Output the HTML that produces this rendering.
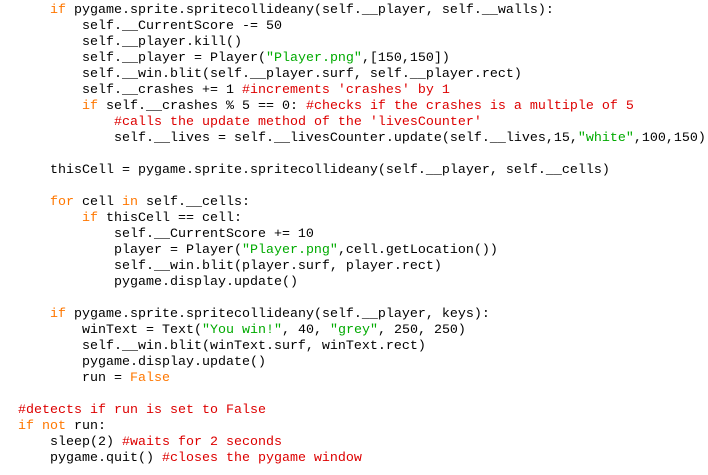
<!DOCTYPE html>
<html><head><meta charset="utf-8"><style>
html,body{margin:0;padding:0;background:#fff;width:708px;height:475px;overflow:hidden}
pre{position:absolute;left:18px;top:3px;margin:0;font-family:"Liberation Mono","Courier New",monospace;font-size:13.33px;line-height:16px;color:#000}
.k{color:#ff7700}.s{color:#00aa00}.c{color:#dd0000}
</style></head><body><pre>    <span class="k">if</span> pygame.sprite.spritecollideany(self.__player, self.__walls):
        self.__CurrentScore -= 50
        self.__player.kill()
        self.__player = Player(<span class="s">"Player.png"</span>,[150,150])
        self.__win.blit(self.__player.surf, self.__player.rect)
        self.__crashes += 1 <span class="c">#increments 'crashes' by 1</span>
        <span class="k">if</span> self.__crashes % 5 == 0: <span class="c">#checks if the crashes is a multiple of 5</span>
            <span class="c">#calls the update method of the 'livesCounter'</span>
            self.__lives = self.__livesCounter.update(self.__lives,15,<span class="s">"white"</span>,100,150)

    thisCell = pygame.sprite.spritecollideany(self.__player, self.__cells)

    <span class="k">for</span> cell <span class="k">in</span> self.__cells:
        <span class="k">if</span> thisCell == cell:
            self.__CurrentScore += 10
            player = Player(<span class="s">"Player.png"</span>,cell.getLocation())
            self.__win.blit(player.surf, player.rect)
            pygame.display.update()

    <span class="k">if</span> pygame.sprite.spritecollideany(self.__player, keys):
        winText = Text(<span class="s">"You win!"</span>, 40, <span class="s">"grey"</span>, 250, 250)
        self.__win.blit(winText.surf, winText.rect)
        pygame.display.update()
        run = <span class="k">False</span>

<span class="c">#detects if run is set to False</span>
<span class="k">if</span> <span class="k">not</span> run:
    sleep(2) <span class="c">#waits for 2 seconds</span>
    pygame.quit() <span class="c">#closes the pygame window</span></pre></body></html>
